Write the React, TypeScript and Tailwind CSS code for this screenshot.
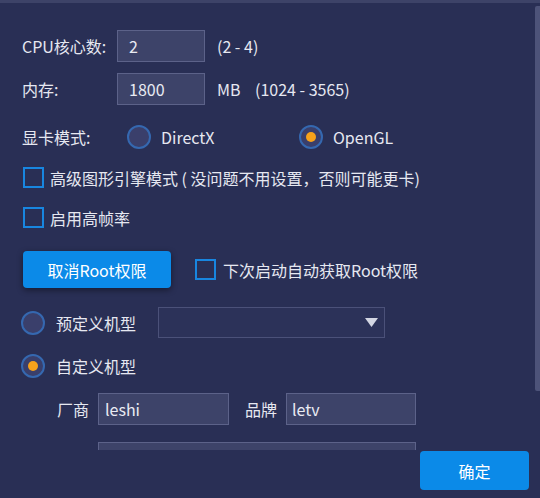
import type { ReactNode } from "react";

function Radio({ checked }: { checked?: boolean }) {
  return (
    <span className="flex h-[24px] w-[24px] shrink-0 items-center justify-center rounded-full border-2 border-[#3568b0] bg-[#3a3f6b]">
      {checked && <span className="h-[10px] w-[10px] rounded-full bg-[#f7a21b]" />}
    </span>
  );
}

function Checkbox({ className = "" }: { className?: string }) {
  return <span className={`block h-[21px] w-[21px] shrink-0 border-2 border-[#1886e0] ${className}`} />;
}

function Field({ value, className }: { value?: string; className: string }) {
  return (
    <div
      className={`flex h-[32px] shrink-0 items-center border border-[#5c6289] bg-[#3d4369] text-[#e9ebf3] ${className}`}
    >
      {value}
    </div>
  );
}

function Row({ children, className }: { children: ReactNode; className: string }) {
  return <div className={`flex items-center ${className}`}>{children}</div>;
}

export default function App() {
  return (
    <div
      className="relative flex h-[498px] w-[540px] flex-col overflow-hidden bg-[#292f55] text-[16px] leading-none text-[#e6e8f1]"
      style={{ fontFamily: '"Noto Sans CJK SC", "Noto Sans", sans-serif' }}
    >
      <div className="h-[3px] shrink-0 bg-[#3d4368]" />

      <div className="relative h-[447px] shrink-0 overflow-hidden">
        <div className="flex flex-col">
          <Row className="mt-[27px] pl-[22px]">
            <span className="w-[95px]">CPU核心数:</span>
            <Field value="2" className="w-[88px] pl-[11px]" />
            <span className="ml-[12px]">(2 - 4)</span>
          </Row>

          <Row className="mt-[11px] pl-[22px]">
            <span className="w-[95px]">内存:</span>
            <Field value="1800" className="w-[88px] pl-[11px]" />
            <span className="ml-[12px] w-[38px]">MB</span>
            <span>(1024 - 3565)</span>
          </Row>

          <Row className="mt-[16px] h-[32px] pl-[22px]">
            <span className="w-[105px]">显卡模式:</span>
            <Radio />
            <span className="ml-[10px] w-[138px]">DirectX</span>
            <Radio checked />
            <span className="ml-[10px]">OpenGL</span>
          </Row>

          <Row className="mt-[14px] h-[21px] pl-[23px]">
            <Checkbox />
            <span className="ml-[6px] whitespace-pre">高级图形引擎模式 ( 没问题不用设置，否则可能更卡)</span>
          </Row>

          <Row className="mt-[19px] h-[21px] pl-[23px]">
            <Checkbox />
            <span className="ml-[6px]">启用高帧率</span>
          </Row>

          <Row className="mt-[23px] pl-[23px]">
            <button className="flex h-[37px] w-[148px] items-center justify-center rounded-[4px] bg-[#0b8ae8] text-white shadow-[0_2px_6px_rgba(0,0,0,0.45)]">
              取消Root权限
            </button>
            <Checkbox className="ml-[24px]" />
            <span className="ml-[7px]">下次启动自动获取Root权限</span>
          </Row>

          <Row className="mt-[19px] pl-[21px]">
            <Radio />
            <span className="ml-[11px] w-[102px]">预定义机型</span>
            <div className="flex h-[31px] w-[227px] items-center justify-end border border-[#4b5179] bg-[#2c3259] pr-[6px]">
              <svg width="13" height="9" viewBox="0 0 13 9">
                <path d="M0 0 L13 0 L6.5 9 Z" fill="#d3d6e3" />
              </svg>
            </div>
          </Row>

          <Row className="mt-[16px] h-[24px] pl-[21px]">
            <Radio checked />
            <span className="ml-[11px]">自定义机型</span>
          </Row>

          <Row className="mt-[15px] pl-[57px]">
            <span className="w-[41px]">厂商</span>
            <Field value="leshi" className="w-[131px] pl-[6px]" />
            <span className="ml-[16px] w-[41px]">品牌</span>
            <Field value="letv" className="w-[130px] pl-[5px]" />
          </Row>

          <Row className="mt-[17px] pl-[98px]">
            <Field className="w-[318px]" />
          </Row>
        </div>

        <div className="absolute right-0 top-[3px] h-[385px] w-[5px] rounded-l-[2px] bg-[#4d5379]" />
      </div>

      <div className="flex flex-1 items-start justify-end pr-[11px] pt-[1px]">
        <button className="flex h-[39px] w-[109px] items-center justify-center rounded-[4px] bg-[#0b8ae8] text-white">
          确定
        </button>
      </div>
    </div>
  );
}
